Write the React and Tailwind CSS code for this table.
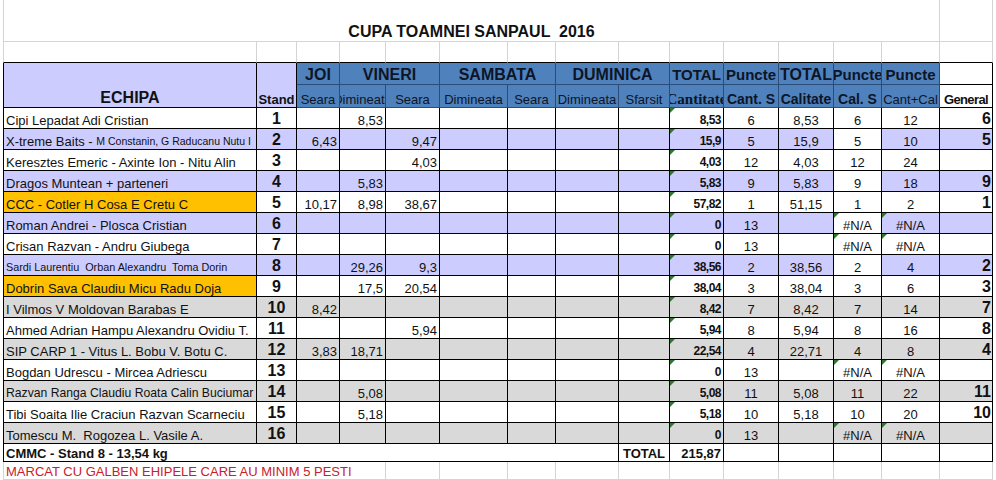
import React from 'react';

const rows = [
  { t: 'w', name: 'Cipi Lepadat Adi Cristian', stand: '1', d: ['', '8,53', '', '', '', '', ''], cant: '8,53', cs: '6', cal: '8,53', cals: '6', cc: '12', gen: '6' },
  { t: 'l', name: <>X-treme Baits - <span className="text-[10.5px]">M Constanin, G Raducanu Nutu I</span></>, stand: '2', d: ['6,43', '', '9,47', '', '', '', ''], cant: '15,9', cs: '5', cal: '15,9', cals: '5', cc: '10', gen: '5' },
  { t: 'w', name: 'Keresztes Emeric - Axinte Ion - Nitu Alin', stand: '3', d: ['', '', '4,03', '', '', '', ''], cant: '4,03', cs: '12', cal: '4,03', cals: '12', cc: '24', gen: '' },
  { t: 'l', name: 'Dragos Muntean + parteneri', stand: '4', d: ['', '5,83', '', '', '', '', ''], cant: '5,83', cs: '9', cal: '5,83', cals: '9', cc: '18', gen: '9' },
  { t: 'o', name: 'CCC - Cotler H Cosa E Cretu C', stand: '5', d: ['10,17', '8,98', '38,67', '', '', '', ''], cant: '57,82', cs: '1', cal: '51,15', cals: '1', cc: '2', gen: '1' },
  { t: 'l', name: 'Roman Andrei - Plosca Cristian', stand: '6', d: ['', '', '', '', '', '', ''], cant: '0', cs: '13', cal: '', cals: '#N/A', cc: '#N/A', gen: '' },
  { t: 'w', name: 'Crisan Razvan - Andru Giubega', stand: '7', d: ['', '', '', '', '', '', ''], cant: '0', cs: '13', cal: '', cals: '#N/A', cc: '#N/A', gen: '' },
  { t: 'l', name: <span className="text-[10.8px]">Sardi Laurentiu  Orban Alexandru  Toma Dorin</span>, stand: '8', d: ['', '29,26', '9,3', '', '', '', ''], cant: '38,56', cs: '2', cal: '38,56', cals: '2', cc: '4', gen: '2' },
  { t: 'o', name: 'Dobrin Sava Claudiu Micu Radu Doja', stand: '9', d: ['', '17,5', '20,54', '', '', '', ''], cant: '38,04', cs: '3', cal: '38,04', cals: '3', cc: '6', gen: '3' },
  { t: 'g', name: 'I Vilmos V Moldovan Barabas E', stand: '10', d: ['8,42', '', '', '', '', '', ''], cant: '8,42', cs: '7', cal: '8,42', cals: '7', cc: '14', gen: '7' },
  { t: 'w', name: 'Ahmed Adrian Hampu Alexandru Ovidiu T.', stand: '11', d: ['', '', '5,94', '', '', '', ''], cant: '5,94', cs: '8', cal: '5,94', cals: '8', cc: '16', gen: '8' },
  { t: 'g', name: 'SIP CARP 1 - Vitus L. Bobu V. Botu C.', stand: '12', d: ['3,83', '18,71', '', '', '', '', ''], cant: '22,54', cs: '4', cal: '22,71', cals: '4', cc: '8', gen: '4' },
  { t: 'w', name: 'Bogdan Udrescu - Mircea Adriescu', stand: '13', d: ['', '', '', '', '', '', ''], cant: '0', cs: '13', cal: '', cals: '#N/A', cc: '#N/A', gen: '' },
  { t: 'g', name: <span className="text-[12.2px]">Razvan Ranga Claudiu Roata Calin Buciumar</span>, stand: '14', d: ['', '5,08', '', '', '', '', ''], cant: '5,08', cs: '11', cal: '5,08', cals: '11', cc: '22', gen: '11' },
  { t: 'w', name: 'Tibi Soaita Ilie Craciun Razvan Scarneciu', stand: '15', d: ['', '5,18', '', '', '', '', ''], cant: '5,18', cs: '10', cal: '5,18', cals: '10', cc: '20', gen: '10' },
  { t: 'g', name: 'Tomescu M.  Rogozea L. Vasile A.', stand: '16', d: ['', '', '', '', '', '', ''], cant: '0', cs: '13', cal: '', cals: '#N/A', cc: '#N/A', gen: '' },
];

// fill colour of a data cell by row type and column index
const bg = (t, c) => {
  if (t === 'g') return 'bg-[#d9d9d9]';
  if (t === 'l') return c === 12 ? 'bg-white' : 'bg-[#ccccff]';
  if (t === 'o') return c === 0 ? 'bg-[#ffc000]' : 'bg-white';
  return 'bg-white';
};

const Flag = () => (
  <span className="absolute left-0 top-0 h-0 w-0 border-t-[5px] border-r-[5px] border-t-[#2a7a2a] border-r-transparent" />
);

const cell = 'relative flex items-end overflow-hidden whitespace-pre border-r border-b border-black';
const grid = 'border-r border-b border-[#d4d4d4]';
const blue = 'flex items-end justify-center overflow-hidden whitespace-nowrap bg-[#4f81bd] border-r border-b border-[#2b4b78] text-[#0d1526]';

const DataRow = ({ r }) => (
  <>
    <div className={`${cell} ${bg(r.t, 0)} border-l pl-[2px] text-[13px] leading-[15px]`}>{r.name}</div>
    <div className={`${cell} ${bg(r.t, 1)} justify-center text-[16px] font-bold leading-[18px]`}>{r.stand}</div>
    {r.d.map((v, i) => (
      <div key={i} className={`${cell} ${bg(r.t, 2 + i)} justify-end pr-[2px] text-[13px] leading-[15px]`}>{v}</div>
    ))}
    <div className={`${cell} ${bg(r.t, 9)} justify-end pr-[2px] text-[12px] font-bold tracking-[-0.5px] leading-[15px]`}>
      <Flag />
      {r.cant}
    </div>
    <div className={`${cell} ${bg(r.t, 10)} justify-center text-[13px] leading-[15px]`}>{r.cs}</div>
    <div className={`${cell} ${bg(r.t, 11)} justify-center text-[13px] leading-[15px]`}>{r.cal}</div>
    <div className={`${cell} ${bg(r.t, 12)} justify-center text-[13px] leading-[15px]`}>
      {r.cals === '#N/A' && <Flag />}
      {r.cals}
    </div>
    <div className={`${cell} ${bg(r.t, 13)} justify-center text-[13px] leading-[15px]`}>
      {r.cc === '#N/A' && <Flag />}
      {r.cc}
    </div>
    <div className={`${cell} ${bg(r.t, 14)} justify-end pr-px text-[16px] font-bold leading-[18px]`}>{r.gen}</div>
  </>
);

export default function App() {
  return (
    <div className="w-[996px] h-[480px] overflow-hidden bg-white pl-[3px] font-['Liberation_Sans',Arial,sans-serif] text-[#111]">
      <div className="grid w-[990px] grid-cols-[254px_40px_43px_46px_54px_68px_48px_63px_51px_54px_55px_55px_48px_58px_53px] grid-rows-[42px_21px_22px_23px_repeat(16,21px)_18px_18px]">
        {/* title */}
        <div className={`col-span-14 flex items-end justify-center whitespace-pre border-l ${grid} text-[16px] font-bold leading-[18px]`}>
          CUPA TOAMNEI SANPAUL  2016
        </div>
        <div className={grid} />

        {/* empty row */}
        {Array.from({ length: 15 }).map((_, i) => (
          <div key={i} className={`border-r border-r-[#d4d4d4] border-b border-b-black ${i === 0 ? 'border-l border-l-[#d4d4d4]' : ''}`} />
        ))}

        {/* header row 1 */}
        <div className={`${cell} row-span-2 border-l bg-[#ccccff] justify-center text-[16px] font-bold leading-[18px]`}>ECHIPA</div>
        <div className={`${cell} row-span-2 bg-[#ccccff] justify-center text-[13px] font-bold leading-[15px]`}>Stand</div>
        <div className={`${blue} text-[16px] font-bold leading-[18px]`}>JOI</div>
        <div className={`${blue} col-span-2 text-[16px] font-bold leading-[18px]`}>VINERI</div>
        <div className={`${blue} col-span-2 text-[16px] font-bold leading-[18px]`}>SAMBATA</div>
        <div className={`${blue} col-span-2 text-[16px] font-bold leading-[18px]`}>DUMINICA</div>
        <div className={`${blue} text-[15px] font-bold leading-[18px]`}>TOTAL</div>
        <div className={`${blue} text-[15px] font-bold leading-[18px]`}>Puncte</div>
        <div className={`${blue} text-[16px] font-bold leading-[18px]`}>TOTAL</div>
        <div className={`${blue} text-[15px] font-bold leading-[18px]`}>Puncte</div>
        <div className={`${blue} text-[15px] font-bold leading-[18px]`}>Puncte</div>
        <div className={`${cell} bg-white`} />

        {/* header row 2 */}
        <div className={`${blue} text-[13px] leading-[15px]`}>Seara</div>
        <div className={`${blue} text-[13px] leading-[15px]`}>Dimineata</div>
        <div className={`${blue} text-[13px] leading-[15px]`}>Seara</div>
        <div className={`${blue} text-[13px] leading-[15px]`}>Dimineata</div>
        <div className={`${blue} text-[13px] leading-[15px]`}>Seara</div>
        <div className={`${blue} text-[13px] leading-[15px]`}>Dimineata</div>
        <div className={`${blue} text-[13px] leading-[15px]`}>Sfarsit</div>
        <div className={`${blue} font-['Liberation_Serif',serif] text-[15px] font-bold leading-[16px]`}>Cantitate</div>
        <div className={`${blue} text-[14px] font-bold leading-[16px]`}>Cant. S</div>
        <div className={`${blue} text-[14px] font-bold leading-[16px]`}>Calitate</div>
        <div className={`${blue} text-[14px] font-bold leading-[16px]`}>Cal. S</div>
        <div className={`${blue} text-[13px] leading-[15px]`}>Cant+Cal</div>
        <div className={`${cell} bg-white justify-center text-[13px] font-bold tracking-[-0.6px] leading-[15px]`}>General</div>

        {rows.map((r, i) => (
          <DataRow key={i} r={r} />
        ))}

        {/* footer */}
        <div className={`${cell} col-span-8 border-l pl-[2px] text-[13px] font-bold leading-[15px]`}>CMMC - Stand 8 - 13,54 kg</div>
        <div className={`${cell} justify-center text-[13px] font-bold leading-[15px]`}>TOTAL</div>
        <div className={`${cell} justify-end pr-[2px] text-[13px] font-bold leading-[15px]`}>215,87</div>
        {Array.from({ length: 5 }).map((_, i) => (
          <div key={i} className={cell} />
        ))}

        <div className={`col-span-4 flex items-end whitespace-nowrap border-l ${grid} pl-[2px] text-[13px] leading-[15px] text-[#c8202a]`}>
          MARCAT CU GALBEN EHIPELE CARE AU MINIM 5 PESTI
        </div>
        {Array.from({ length: 11 }).map((_, i) => (
          <div key={i} className={grid} />
        ))}
      </div>
    </div>
  );
}
